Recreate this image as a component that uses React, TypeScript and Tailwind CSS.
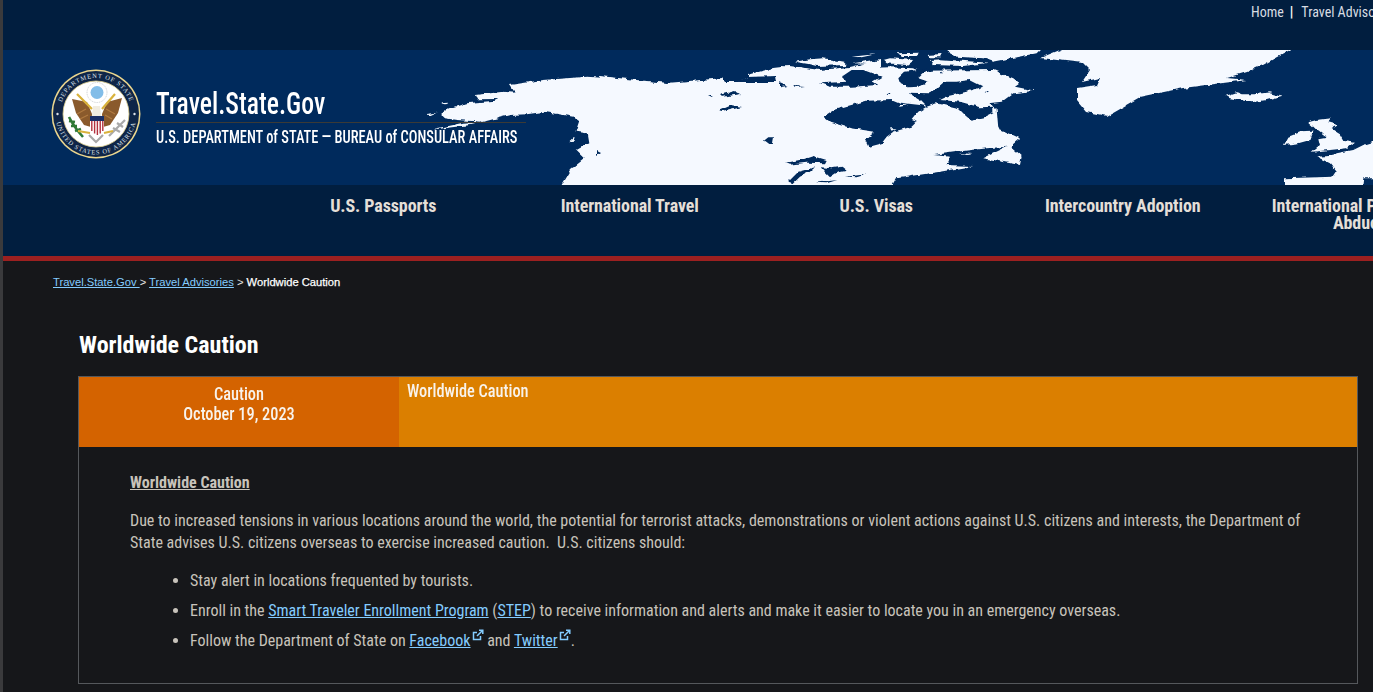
function Seal() {
  return (
    <svg viewBox="0 0 90 90" className="h-[90px] w-[90px] shrink-0">
      <defs>
        <path id="sealTop" d="M 9 45 A 36 36 0 0 1 81 45" />
        <path id="sealBottom" d="M 4.5 45 A 40.5 40.5 0 0 0 85.5 45" />
      </defs>
      <circle cx="45" cy="45" r="44.5" fill="#ecd78f" />
      <circle cx="45" cy="45" r="43" fill="#0f2548" />
      <circle cx="45" cy="45" r="33" fill="#fff" stroke="#e0cf8a" strokeWidth="0.8" />
      <text fontSize="6.4" fill="#dfe3ea" fontFamily="'Liberation Serif', serif" letterSpacing="0.9">
        <textPath href="#sealTop" startOffset="50%" textAnchor="middle">DEPARTMENT OF STATE</textPath>
      </text>
      <text fontSize="6.4" fill="#dfe3ea" fontFamily="'Liberation Serif', serif" letterSpacing="0.9">
        <textPath href="#sealBottom" startOffset="50%" textAnchor="middle">UNITED STATES OF AMERICA</textPath>
      </text>
      <circle cx="6.5" cy="45" r="1.2" fill="#dfe3ea" />
      <circle cx="83.5" cy="45" r="1.2" fill="#dfe3ea" />
      <circle cx="46" cy="23.5" r="10" fill="#fff" stroke="#c6c9cd" strokeWidth="0.9" strokeDasharray="1 0.8" />
      <circle cx="46" cy="23.5" r="6.5" fill="#82bde8" />
      <path d="M21 30 L36 33 L41 45 L40 58 L33 56 L25 44 Z" fill="#8a5a2c" />
      <path d="M71 29 L56 33 L51 45 L52 58 L59 56 L67 44 Z" fill="#8a5a2c" />
      <path d="M26 45 L35 40 M29 50 L37 46 M64 45 L55 40 M61 50 L54 46" stroke="#b07a40" strokeWidth="1.2" />
      <path d="M26 25 L41 40 M64 25 L51 40" stroke="#d9b23c" strokeWidth="2.2" fill="none" />
      <path d="M42 37 L49 37 L50 47 L41 47 Z" fill="#f1ece0" />
      <rect x="39" y="47" width="14" height="5" fill="#1b2f66" />
      <path d="M39 52 H53 V60 Q53 63 46 66 Q39 63 39 60 Z" fill="#fff" />
      <path d="M40.8 52 V62 M43.6 52 V64.5 M46.4 52 V66 M49.2 52 V64.5 M51.8 52 V62" stroke="#b3313e" strokeWidth="1.4" />
      <path d="M18 48 Q23 58 32 68 M18 52 L24 53 M20 57 L26 57 M24 62 L30 60" stroke="#2f7a35" strokeWidth="2.6" fill="none" />
      <path d="M58 67 L74 51 M66 54 L72 58 M62 59 L69 63" stroke="#a9a9a9" strokeWidth="2.2" fill="none" />
      <path d="M27 62 L39 64 M53 64 L62 62" stroke="#d9b23c" strokeWidth="2" />
      <path d="M38 66 L45 73 L52 66" stroke="#a8a8a8" strokeWidth="2.2" fill="none" />
    </svg>
  );
}

const water = '#002a5c';

// traced from the picture; each group is in the crop's own 3x coordinates
function WorldMap() {
  return (
    <svg viewBox="3 50 1370 135" className="absolute inset-0 h-full w-full" preserveAspectRatio="none">
      <defs>
        <filter id="coast" x="-2%" y="-10%" width="104%" height="120%">
          <feTurbulence type="fractalNoise" baseFrequency="0.14" numOctaves="2" seed="4" result="noise" />
          <feDisplacementMap in="SourceGraphic" in2="noise" scale="5" xChannelSelector="R" yChannelSelector="G" />
          <feGaussianBlur stdDeviation="0.5" />
        </filter>
      </defs>
      <g filter="url(#coast)">
        {/* west coast and shield */}
        <g fill="#f5f9ff" transform="translate(410 70) scale(0.3333)">
          <path d="M50 132 L80 128 L65 135 L48 134 Z M90 100 L115 98 L105 103 Z" />
          <path d="M70 177 L160 158 L230 154 L180 165 L90 176 Z M475 217 L495 198 L490 215 Z" />
          <path d="M95 128 L130 112 L170 100 L255 92 L265 87 L200 88 L195 75 L280 65 L315 68 L300 45 L400 30 L530 20 L600 25 L900 50 L900 400 L420 400 L480 300 L525 265 L500 240 L535 220 L530 190 L500 185 L510 155 L490 140 L405 125 L350 133 L300 135 L220 155 L140 150 L105 145 L95 135 Z" />
        </g>
        <path
          fill="#f5f9ff"
          d="M600 76 L627 79 L667 83 L713 79 L722 78 L725 82 L737 82 L748 77 L748 75 L773 68 L790 66 L820 70 L850 67 L880 60 L880 200 L600 200 Z"
        />
        {/* eastern Canada */}
        <g transform="translate(780 50) scale(0.3333)">
          <g fill="#f5f9ff">
            <path d="M0 48 L60 52 L130 65 L205 62 L240 55 L330 52 L395 55 L420 62 L640 60 L700 85 L720 100 L705 110 L765 122 L700 130 L665 155 L625 160 L650 175 L655 235 L720 265 L690 290 L725 320 L720 345 L610 325 L680 290 L620 295 L530 305 L460 315 L510 320 L500 345 L580 348 L480 365 L350 385 L330 420 L0 420 Z" />
            <path d="M45 35 L90 28 L130 25 L190 35 L200 45 L110 48 L85 42 Z M215 20 L290 12 L245 22 Z M220 40 L280 30 L275 42 Z M310 30 L330 25 L400 30 L380 45 L320 40 Z" />
            <path d="M350 10 L420 8 L410 18 L370 18 Z M440 15 L485 12 L480 22 L450 22 Z M450 30 L480 28 L625 38 L550 48 L460 45 Z" />
            <path d="M500 -20 L800 -20 L770 10 L640 35 L610 25 L530 20 L510 10 Z" />
          </g>
          <g fill={water}>
            <path d="M130 200 L160 180 L260 152 L340 150 L360 158 L420 165 L440 170 L415 185 L395 210 L410 215 L395 230 L340 245 L320 260 L305 280 L265 290 L255 270 L285 245 L215 235 L150 215 Z" />
            <path d="M385 128 L450 130 L490 95 L530 95 L570 90 L610 110 L560 125 L505 138 L480 150 L540 155 L600 172 L640 170 L640 190 L610 205 L575 212 L555 195 L535 175 L470 160 L440 170 L420 150 Z" />
            <path d="M355 85 L375 65 L410 60 L480 55 L430 70 L415 85 L445 95 L415 110 L385 112 L360 100 Z" />
            <path d="M120 100 L200 95 L185 80 L215 60 L250 60 L305 80 L280 95 L295 105 L215 110 L150 110 Z" />
            <path d="M0 100 L20 108 L0 112 Z M40 105 L75 108 L45 112 Z M325 130 L332 135 L320 135 Z M485 65 L493 70 L482 70 Z M612 125 L628 125 L622 130 Z" />
          </g>
          <path fill="#f5f9ff" d="M350 165 L385 165 L360 170 Z M330 235 L350 235 L335 242 Z M540 310 L580 312 L560 315 Z" />
        </g>
        {/* great lakes and the small lakes west of the bay */}
        <g fill={water} transform="translate(700 120) scale(0.3333)">
          <path d="M192 62 L205 52 L222 52 L218 75 L205 72 Z" />
          <path d="M256 128 L310 118 L340 108 L380 120 L375 130 L320 128 L270 134 Z" />
          <path d="M265 185 L295 155 L345 142 L330 155 L300 170 L280 190 Z" />
          <path d="M362 142 L395 145 L425 140 L440 152 L410 158 L390 172 L378 160 Z" />
          <path d="M435 170 L500 163 L470 172 Z M348 188 L412 180 L380 190 Z" />
        </g>
        <path fill={water} d="M597 151 L601 153 L597 156 Z M720 95 L735 91 L740 94 L722 97 Z M708 95 L713 95 L712 97 Z M718 111 L732 105 L742 107 L722 112 Z M748 77 L775 76 L776 82 L735 82 Z" />
        {/* greenland, iceland, europe */}
        <g fill="#f5f9ff">
          <path d="M1040 58 L1060 50 L1082 40 L1300 40 L1290 50 L1277 57 L1263 65 L1247 72 L1227 78 L1247 80 L1183 88 L1140 97 L1107 116 L1087 112 L1077 100 L1077 88 L1097 85 L1100 78 L1082 82 L1090 70 L1083 63 Z" />
          <g transform="translate(1220 85) scale(0.3333)">
            <path d="M18 32 L50 22 L65 28 L105 28 L150 22 L188 32 L140 45 L95 52 L60 45 L30 40 Z" />
            <path d="M265 112 L290 105 L335 100 L325 112 L355 120 L335 132 L360 148 L370 165 L405 170 L380 190 L330 195 L275 200 L300 180 L295 160 L320 155 L310 150 L290 135 L275 120 Z" />
            <path d="M192 180 L205 155 L240 142 L280 140 L270 165 L235 175 Z" />
            <path d="M290 215 L340 212 L350 205 L400 195 L430 180 L480 165 L480 280 L430 280 L425 320 L195 320 L195 280 L340 275 L350 260 L330 235 Z" />
          </g>
        </g>
      </g>
    </svg>
  );
}

function ExternalIcon() {
  return (
    <svg viewBox="0 0 12 12" className="relative -top-[5px] ml-[1px] inline-block h-[12px] w-[12px] align-baseline" fill="none" stroke="#84ccff" strokeWidth="1.5">
      <path d="M8.5 7 V10.5 H1.5 V3.5 H5" />
      <path d="M5 7 L10.5 1.5 M7 1.2 H10.8 V5" />
    </svg>
  );
}

const navItems = ['U.S. Passports', 'International Travel', 'U.S. Visas', 'Intercountry Adoption', 'International Parental Child Abduction'];
const linkClass = 'text-[#84ccff] underline';

export default function App() {
  return (
    <div className="flex h-[692px] w-[1373px] overflow-hidden bg-[#16171a] font-['Roboto_Condensed','Roboto',sans-serif] [font-stretch:75%]">
      <div className="w-[3px] shrink-0 bg-[#3a3a3c]" />
      <div className="min-w-0 flex-1">
        <div className="flex h-[50px] bg-[#011e3f] pl-[1248px] pt-[4px] text-[14px] leading-[16px] text-[#d8dde3] whitespace-nowrap">
          <span>Home</span>
          <span className="ml-[6px] font-bold text-white">|</span>
          <span className="ml-[8px]">Travel Advisories</span>
        </div>

        <div className="relative h-[135px] overflow-hidden bg-[#002a5c]">
          <WorldMap />
          <div className="relative flex items-start pl-[48px] pt-[19px]">
            <Seal />
            <div className="ml-[15px] mt-[15px] whitespace-nowrap text-white">
              <div className="origin-left scale-x-[0.83] text-[31px] font-medium leading-[40px]">Travel.State.Gov</div>
              <div className="-mt-[2px] w-[370px] border-t border-[#3b3a36] pt-[3px]">
                <div className="origin-left scale-x-[0.80] text-[18px] font-medium leading-[22px]">
                  U.S. DEPARTMENT of STATE — BUREAU of CONSULAR AFFAIRS
                </div>
              </div>
            </div>
          </div>
        </div>

        <div className="flex h-[71px] bg-[#011e3f] pl-[257px] pt-[12px] text-[18px] font-bold leading-[17px] tracking-[-0.1px] text-[#e4dfd8]">
          {navItems.map((item) => (
            <div key={item} className="flex w-[246.5px] shrink-0 justify-center px-[20px] text-center">
              {item}
            </div>
          ))}
        </div>
        <div className="h-[5px] bg-[#9c2020]" />

        <div className="pl-[50px] pt-[15px] font-['Liberation_Sans',sans-serif] text-[11.2px] leading-[13px] text-[#e8e6e3] [font-stretch:100%]">
          <a className={linkClass}>Travel.State.Gov </a>
          <span> &gt; </span>
          <a className={linkClass}>Travel Advisories</a>
          <span> &gt; </span>
          <span className="text-white [-webkit-text-stroke:0.25px_white]">Worldwide Caution</span>
        </div>

        <h1 className="ml-[76px] mt-[41px] text-[24px] font-bold leading-[30px] text-white">Worldwide Caution</h1>

        <div className="ml-[75px] mt-[16px] h-[308px] w-[1280px] border border-[#55585c]">
          <div className="flex h-[70px] text-[#f8f3ec]">
            <div className="w-[320px] bg-[#d46300] pt-[7px] text-center text-[19px] font-medium leading-[20px]">
              <div className="scale-x-[0.86]">Caution</div>
              <div className="scale-x-[0.86]">October 19, 2023</div>
            </div>
            <div className="flex-1 bg-[#db7f00] pl-[8px] pt-[4px] text-[19px] font-medium leading-[20px]">
              <div className="origin-left scale-x-[0.86]">Worldwide Caution</div>
            </div>
          </div>
          <div className="pl-[51px] pr-[40px] pt-[25px] text-[16px] leading-[22px] text-[#c8c3bb]">
            <p className="font-bold underline">Worldwide Caution</p>
            <p className="mt-[16px]">
              Due to increased tensions in various locations around the world, the potential for terrorist attacks, demonstrations or violent actions against U.S. citizens and interests, the Department of State advises U.S. citizens overseas to exercise increased caution.&nbsp; U.S. citizens should:
            </p>
            <ul className="ml-[60px] mt-[16px] flex list-disc flex-col gap-[8px]">
              <li>Stay alert in locations frequented by tourists.</li>
              <li>
                Enroll in the <a className={linkClass}>Smart Traveler Enrollment Program</a> (<a className={linkClass}>STEP</a>) to receive information and alerts and make it easier to locate you in an emergency overseas.
              </li>
              <li>
                Follow the Department of State on <a className={linkClass}>Facebook</a>
                <ExternalIcon /> and <a className={linkClass}>Twitter</a>
                <ExternalIcon />.
              </li>
            </ul>
          </div>
        </div>
      </div>
    </div>
  );
}
